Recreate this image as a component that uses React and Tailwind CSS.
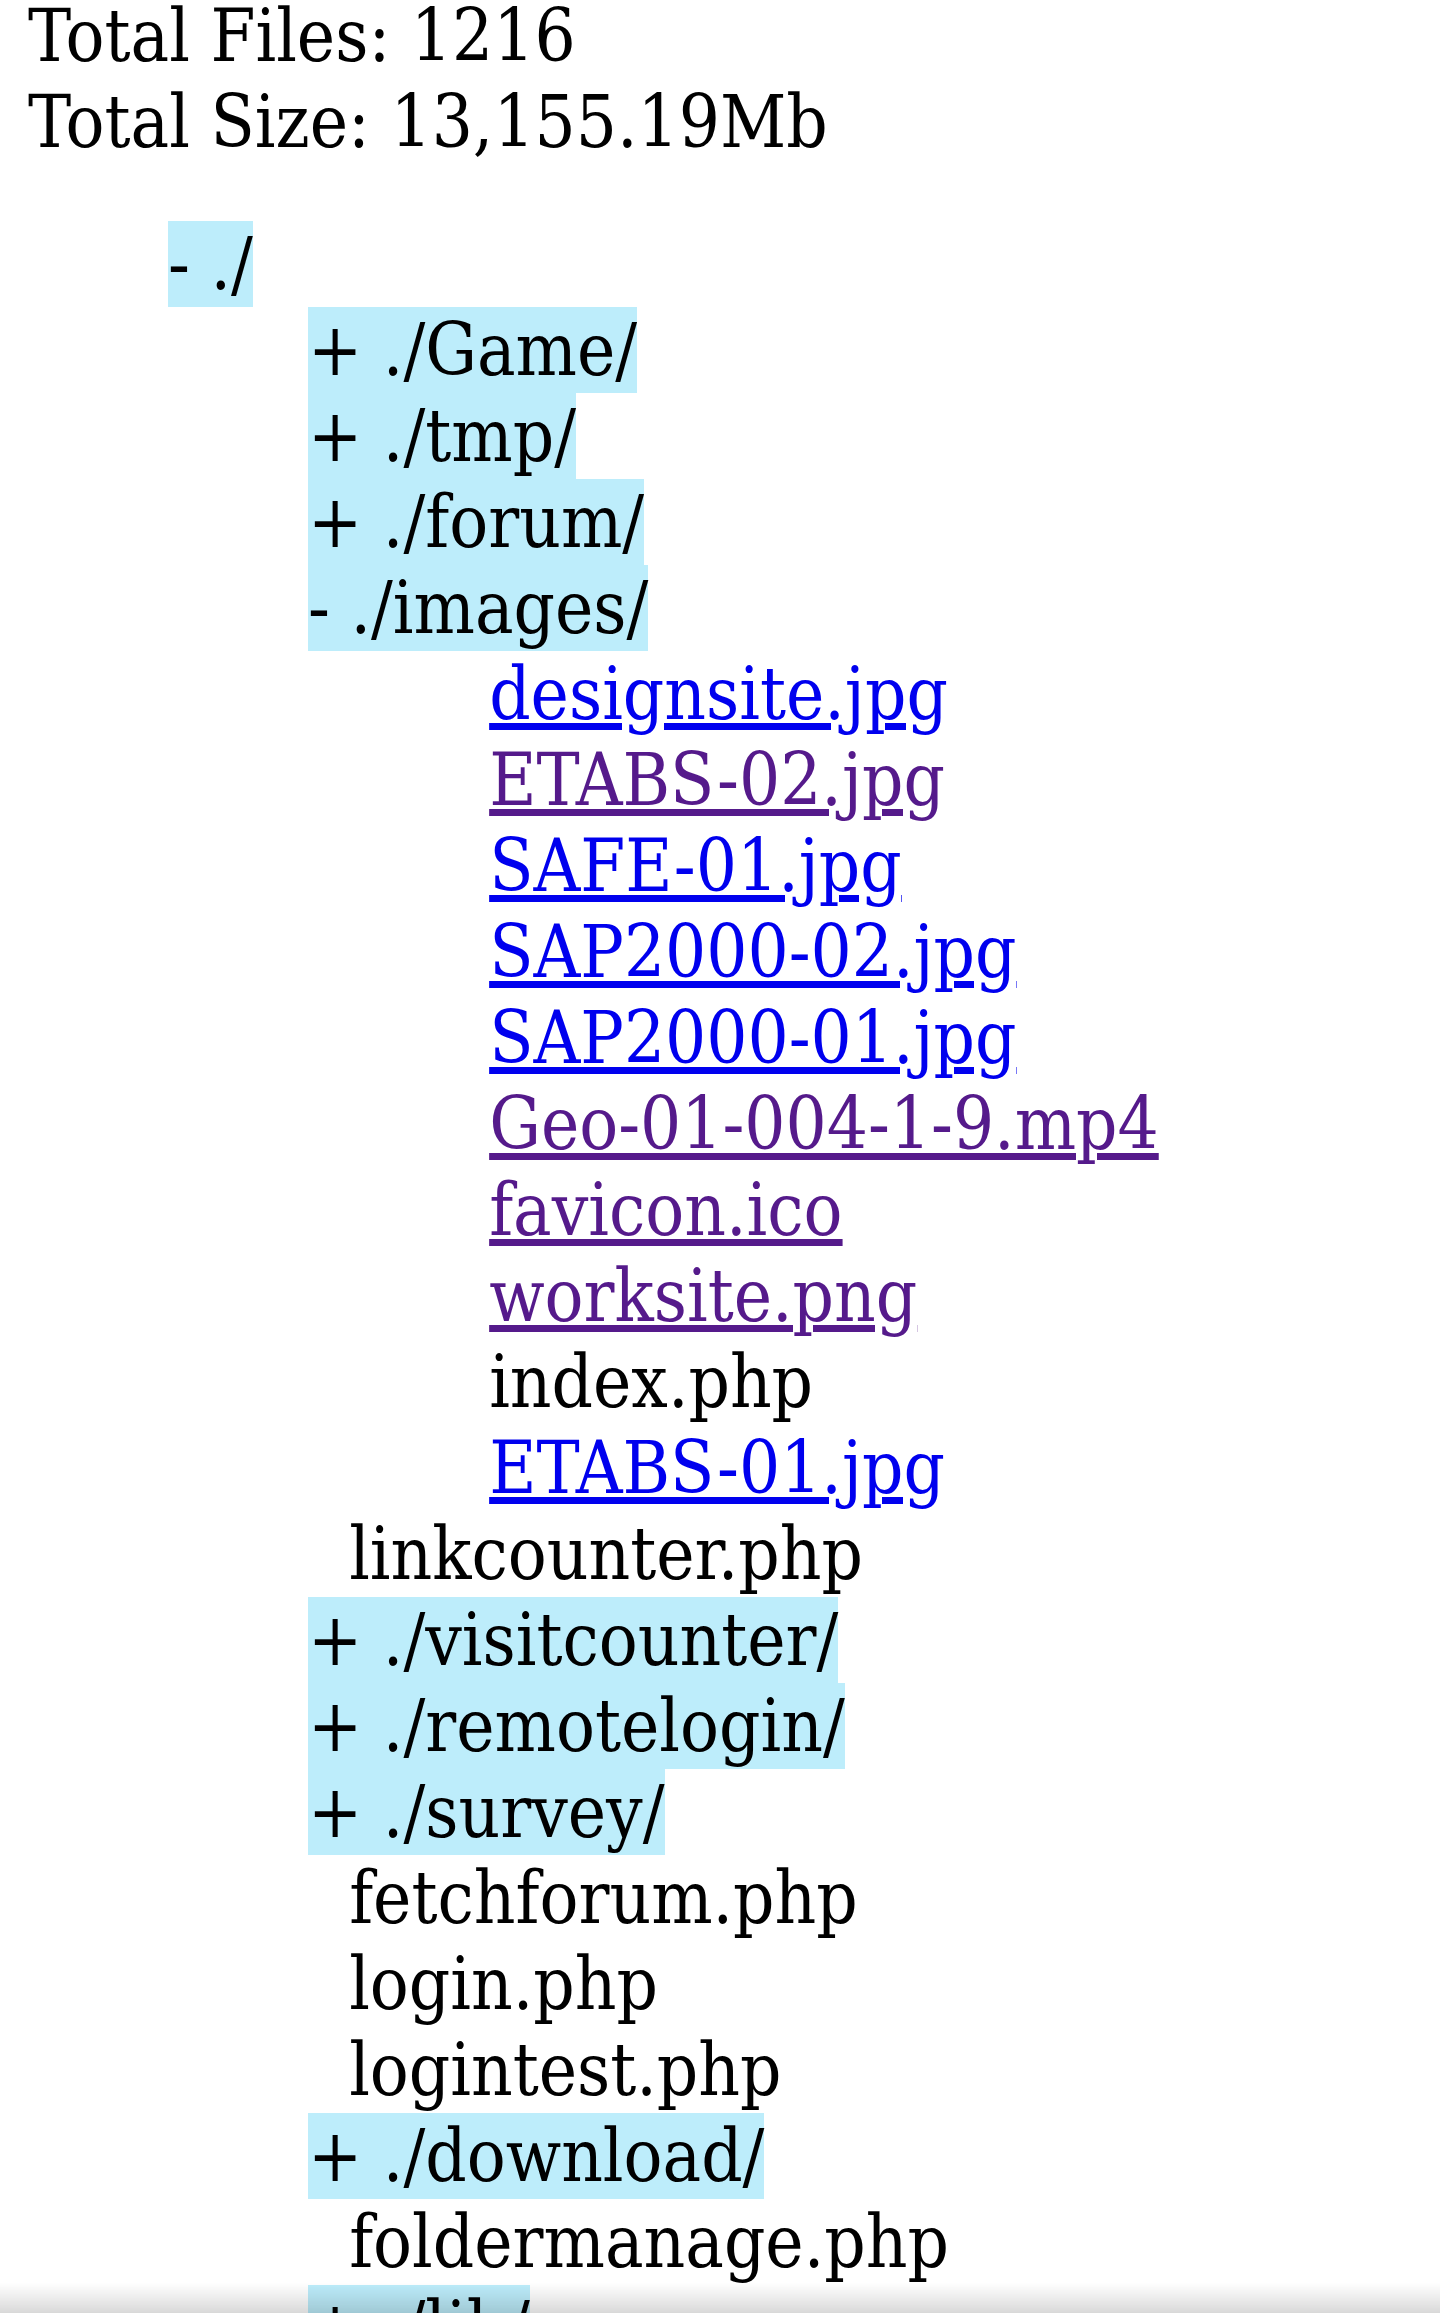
import React from 'react';

// directory listing, as the page prints it
const tree = {
    name: './',
    open: true,
    children: [
        { name: './Game/', children: [] },
        { name: './tmp/', children: [] },
        { name: './forum/', children: [] },
        {
            name: './images/',
            open: true,
            children: [
                { file: 'designsite.jpg', link: true },
                { file: 'ETABS-02.jpg', link: true, visited: true },
                { file: 'SAFE-01.jpg', link: true },
                { file: 'SAP2000-02.jpg', link: true },
                { file: 'SAP2000-01.jpg', link: true },
                { file: 'Geo-01-004-1-9.mp4', link: true, visited: true },
                { file: 'favicon.ico', link: true, visited: true },
                { file: 'worksite.png', link: true, visited: true },
                { file: 'index.php' },
                { file: 'ETABS-01.jpg', link: true },
            ],
        },
        { file: 'linkcounter.php' },
        { name: './visitcounter/', children: [] },
        { name: './remotelogin/', children: [] },
        { name: './survey/', children: [] },
        { file: 'fetchforum.php' },
        { file: 'login.php' },
        { file: 'logintest.php' },
        { name: './download/', children: [] },
        { file: 'foldermanage.php' },
        { name: './lib/', children: [] },
    ],
};

function FileRow({ item }) {
    const color = item.visited ? 'text-[#551a8b]' : 'text-[#0000ee]';
    return (
        <div className="h-[86px] leading-[86px] whitespace-pre">
            {'\u00a0\u00a0'}
            {item.link ? (
                <a href="#" className={`${color} underline`}>{item.file}</a>
            ) : (
                <span>{item.file}</span>
            )}
        </div>
    );
}

function Folder({ node }) {
    return (
        <div>
            <div className="h-[86px] leading-[86px] whitespace-pre">
                <span className="inline-block bg-[#bdedfb] leading-[86px]">
                    {node.open ? '- ' : '+ '}{node.name}
                </span>
            </div>
            {node.open && (
                <div className="ml-[140px]">
                    {node.children.map((c, i) =>
                        c.file ? <FileRow key={i} item={c} /> : <Folder key={i} node={c} />
                    )}
                </div>
            )}
        </div>
    );
}

export default function App() {
    return (
        <div className="relative h-[2313px] overflow-hidden bg-white text-black text-[72px] font-stretch-condensed font-['DejaVu_Serif_Condensed','DejaVu_Serif',serif]">
            <div className="px-[28px] -mt-[7px]">
                <div className="leading-[86px]">Total Files: 1216</div>
                <div className="leading-[86px]">Total Size: 13,155.19Mb</div>

                <div className="mt-[56px] ml-[140px]">
                    <Folder node={tree} />
                </div>
            </div>

            {/* bottom edge shade */}
            <div className="pointer-events-none fixed inset-x-0 bottom-0 h-[30px] bg-gradient-to-b from-transparent to-black/15" />
        </div>
    );
}
